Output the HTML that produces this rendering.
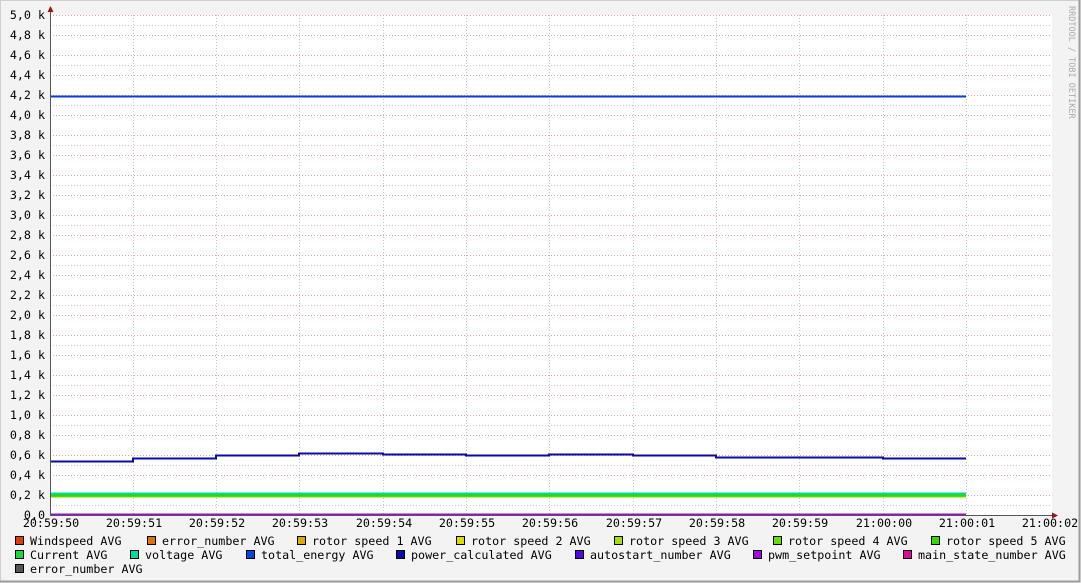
<!DOCTYPE html>
<html><head><meta charset="utf-8"><style>
html,body{margin:0;padding:0;background:#f3f3f3}
svg{display:block}
text{font-family:"DejaVu Sans Mono","Liberation Mono",monospace;font-size:11.7px;fill:#000}
</style></head><body>
<svg width="1081" height="583" viewBox="0 0 1081 583" xmlns="http://www.w3.org/2000/svg">
<rect x="0" y="0" width="1081" height="583" fill="#f3f3f3"/>
<path d="M0.5 582V0.5H1080" stroke="#cfcfcf" fill="none"/>
<path d="M1079.5 0V581.5H0" stroke="#9c9c9c" stroke-width="2" fill="none"/>
<rect x="50" y="15" width="1002" height="500" fill="#fff"/>
<g stroke="#c8c8c8" stroke-dasharray="1,2" stroke-width="1">
<path d="M50 25.5H1052M50 65.5H1052M50 105.5H1052M50 145.5H1052M50 185.5H1052M50 225.5H1052M50 265.5H1052M50 305.5H1052M50 345.5H1052M50 385.5H1052M50 425.5H1052M50 465.5H1052M50 505.5H1052"/>
<path d="M133.5 15V515M216.5 15V515M299.5 15V515M383.5 15V515M466.5 15V515M549.5 15V515M633.5 15V515M716.5 15V515M799.5 15V515M883.5 15V515M966.5 15V515"/>
</g>
<g stroke="#dca0a0" stroke-dasharray="1,2" stroke-width="1">
<path d="M50 15.5H1052M50 35.5H1052M50 55.5H1052M50 75.5H1052M50 95.5H1052M50 115.5H1052M50 135.5H1052M50 155.5H1052M50 175.5H1052M50 195.5H1052M50 215.5H1052M50 235.5H1052M50 255.5H1052M50 275.5H1052M50 295.5H1052M50 315.5H1052M50 335.5H1052M50 355.5H1052M50 375.5H1052M50 395.5H1052M50 415.5H1052M50 435.5H1052M50 455.5H1052M50 475.5H1052M50 495.5H1052"/>
</g>
<path d="M50 96.5H966" stroke="#0a3ee0" stroke-width="2"/>
<path d="M50 493.5H966" stroke="#00dca0" stroke-width="2"/>
<path d="M50 495.5H966" stroke="#2ed800" stroke-width="2"/>
<path d="M50 497H966" stroke="#7ade00" stroke-width="1"/>
<path d="M50 461.5H133V458.5H216V455.5H299V453.5H383V454.5H466V455.5H549V454.5H633V455.5H716V457.5H883V458.5H966" stroke="#0a0aa8" stroke-width="2" fill="none"/>
<path d="M50 514.5H966" stroke="#9a0ae0" stroke-width="2"/>
<path d="M50.5 10V515.5H1054" stroke="#555" stroke-width="1" fill="none"/>
<path d="M47.5 12L50.5 6L53.5 12Z" fill="#a01010"/>
<path d="M1052 512.5L1058 515.5L1052 518.5Z" fill="#a01010"/>
<g text-anchor="end">
<text x="45" y="19">5,0 k</text><text x="45" y="39">4,8 k</text><text x="45" y="59">4,6 k</text><text x="45" y="79">4,4 k</text><text x="45" y="99">4,2 k</text><text x="45" y="119">4,0 k</text><text x="45" y="139">3,8 k</text><text x="45" y="159">3,6 k</text><text x="45" y="179">3,4 k</text><text x="45" y="199">3,2 k</text><text x="45" y="219">3,0 k</text><text x="45" y="239">2,8 k</text><text x="45" y="259">2,6 k</text><text x="45" y="279">2,4 k</text><text x="45" y="299">2,2 k</text><text x="45" y="319">2,0 k</text><text x="45" y="339">1,8 k</text><text x="45" y="359">1,6 k</text><text x="45" y="379">1,4 k</text><text x="45" y="399">1,2 k</text><text x="45" y="419">1,0 k</text><text x="45" y="439">0,8 k</text><text x="45" y="459">0,6 k</text><text x="45" y="479">0,4 k</text><text x="45" y="499">0,2 k</text><text x="45" y="519">0,0</text>
</g>
<g text-anchor="middle">
<text x="51" y="527">20:59:50</text><text x="134" y="527">20:59:51</text><text x="217" y="527">20:59:52</text><text x="300" y="527">20:59:53</text><text x="384" y="527">20:59:54</text><text x="467" y="527">20:59:55</text><text x="550" y="527">20:59:56</text><text x="634" y="527">20:59:57</text><text x="717" y="527">20:59:58</text><text x="800" y="527">20:59:59</text><text x="884" y="527">21:00:00</text><text x="967" y="527">21:00:01</text><text x="1050" y="527">21:00:02</text>
</g>
<text transform="translate(1069,6) rotate(90)" style="font-size:8.5px;fill:#aaa">RRDTOOL / TOBI OETIKER</text>
<g stroke="#000" stroke-width="1">
<rect x="15.5" y="536.5" width="8" height="8" fill="#e03c0a"/>
<rect x="147.5" y="536.5" width="8" height="8" fill="#e07400"/>
<rect x="297.5" y="536.5" width="8" height="8" fill="#dcaa00"/>
<rect x="456.5" y="536.5" width="8" height="8" fill="#dcdc00"/>
<rect x="614.5" y="536.5" width="8" height="8" fill="#a6e000"/>
<rect x="773.5" y="536.5" width="8" height="8" fill="#6ade00"/>
<rect x="931.5" y="536.5" width="8" height="8" fill="#36d800"/>
<rect x="15.5" y="550.5" width="8" height="8" fill="#10dc40"/>
<rect x="130.5" y="550.5" width="8" height="8" fill="#00dca0"/>
<rect x="246.5" y="550.5" width="8" height="8" fill="#0a44e0"/>
<rect x="396.5" y="550.5" width="8" height="8" fill="#0a0aa8"/>
<rect x="575.5" y="550.5" width="8" height="8" fill="#4a0ae0"/>
<rect x="753.5" y="550.5" width="8" height="8" fill="#a00ae0"/>
<rect x="903.5" y="550.5" width="8" height="8" fill="#e00a9a"/>
<rect x="15.5" y="564.5" width="8" height="8" fill="#555"/>
</g>
<text x="30" y="545">Windspeed AVG</text>
<text x="162" y="545">error_number AVG</text>
<text x="312" y="545">rotor speed 1 AVG</text>
<text x="471" y="545">rotor speed 2 AVG</text>
<text x="629" y="545">rotor speed 3 AVG</text>
<text x="788" y="545">rotor speed 4 AVG</text>
<text x="946" y="545">rotor speed 5 AVG</text>
<text x="30" y="559">Current AVG</text>
<text x="145" y="559">voltage AVG</text>
<text x="261" y="559">total_energy AVG</text>
<text x="411" y="559">power_calculated AVG</text>
<text x="590" y="559">autostart_number AVG</text>
<text x="768" y="559">pwm_setpoint AVG</text>
<text x="918" y="559">main_state_number AVG</text>
<text x="30" y="573">error_number AVG</text>
</svg>
</body></html>
